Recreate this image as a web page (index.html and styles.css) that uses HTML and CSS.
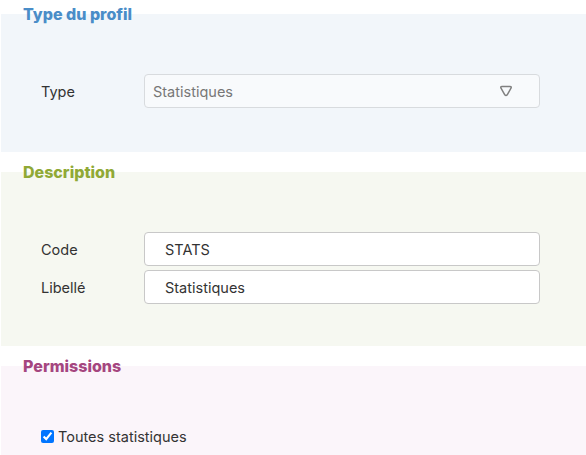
FILE: index.html
```html
<!DOCTYPE html>
<html lang="fr">
<head>
    <meta charset="UTF-8">
    <title>Profil</title>
    <link rel="stylesheet" href="styles.css">
</head>
<body>
    <section class="block block-type">
        <h2 class="block-title">Type du profil</h2>
        <div class="block-body">
            <div class="row">
                <label class="row-label">Type</label>
                <div class="select">
                    <span>Statistiques</span>
                    <!-- rounded down arrow -->
                    <svg class="select-arrow" width="14" height="12" viewBox="0 0 14 12">
                        <path d="M3 1.5 H11 Q12.8 1.5 12 3.2 L8.2 9.8 Q7 11.4 5.8 9.8 L2 3.2 Q1.2 1.5 3 1.5 Z" fill="none" stroke="#808080" stroke-width="1.5" stroke-linejoin="round"/>
                    </svg>
                </div>
            </div>
        </div>
    </section>

    <section class="block block-desc">
        <h2 class="block-title">Description</h2>
        <div class="block-body">
            <div class="row">
                <label class="row-label">Code</label>
                <input class="field" type="text" value="STATS">
            </div>
            <div class="row">
                <label class="row-label">Libellé</label>
                <input class="field" type="text" value="Statistiques">
            </div>
        </div>
    </section>

    <section class="block block-perm">
        <h2 class="block-title">Permissions</h2>
        <div class="block-body">
            <label class="check">
                <input type="checkbox" checked>
                Toutes statistiques
            </label>
        </div>
    </section>
</body>
</html>
```

FILE: styles.css
```css
body {
    font-family: Inter, "Open Sans", sans-serif;
    font-size: 14.5px;
    color: #333;
    margin: 0;
    padding: 0 0 0 1px;
    background-color: #fff;
}
.block {
    margin-top: 11px;
}
.block:first-child {
    margin-top: 5px;
}
.block-title {
    margin: 0 0 -9px 22px;
    font-size: 16px;
    line-height: 18px;
    font-weight: 800;
}
.block-body {
    padding: 60px 46px 44px 40px;
}
.block-type .block-title {
    color: #4a8dc8;
}
.block-type .block-body {
    background-color: #f2f6fa;
}
.block-desc .block-title {
    color: #90a935;
}
.block-desc .block-body {
    background-color: #f6f8f1;
    padding-bottom: 42px;
}
.block-perm .block-title {
    color: #a5467f;
}
.block-perm .block-body {
    background-color: #fbf5fa;
    padding-bottom: 20px;
}
.row {
    display: flex;
    align-items: center;
    margin-bottom: 4px;
}
.row:last-child {
    margin-bottom: 0;
}
.row-label {
    width: 103px;
    flex-shrink: 0;
}
.select {
    display: flex;
    align-items: center;
    justify-content: space-between;
    width: 396px;
    height: 34px;
    box-sizing: border-box;
    padding: 0 26px 0 8px;
    background-color: #f8fafc;
    border: 1px solid #d8dbde;
    border-radius: 4px;
    color: #777;
}
.select-arrow {
    display: block;
}
.field {
    width: 396px;
    height: 34px;
    box-sizing: border-box;
    padding: 0 20px;
    font-family: inherit;
    font-size: 14.5px;
    color: #333;
    background-color: #fff;
    border: 1px solid #c8c8c8;
    border-radius: 4px;
    outline: none;
}
.check {
    display: flex;
    align-items: center;
    height: 20px;
}
.check input {
    width: 13px;
    height: 13px;
    margin: 0 4px 0 0;
}
```
